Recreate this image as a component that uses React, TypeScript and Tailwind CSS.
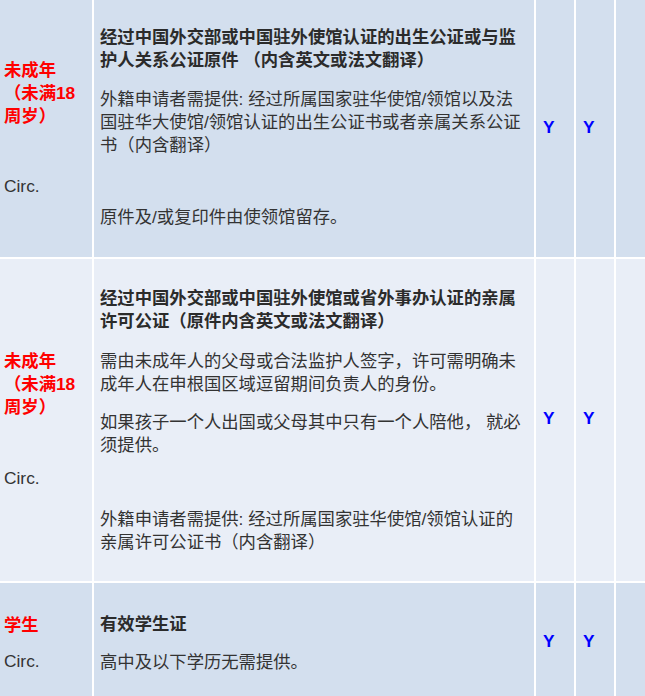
import React from "react";

const font = { fontFamily: '"Liberation Sans", "Noto Sans CJK SC", sans-serif' };

function Who({ label, lines, gap }: { label?: string; lines: string[]; gap: string }) {
  return (
    <div className="flex flex-col justify-center pl-[4px]">
      <div className="font-bold text-[#ff0000] whitespace-nowrap">
        {lines.map((l, i) => (
          <div key={i}>{l}</div>
        ))}
      </div>
      <div className={`${gap} text-[#333]`}>{label ?? "Circ."}</div>
    </div>
  );
}

function Yes() {
  return (
    <div className="flex items-center pl-[7px] pb-[3px] font-bold text-[#0000ff]">Y</div>
  );
}

export default function App() {
  return (
    <div
      className="w-[645px] h-[696px] overflow-hidden bg-white text-[17.33px] leading-[23px] text-[#333]"
      style={font}
    >
      <div className="grid grid-cols-[92px_440px_38px_38px_1fr] grid-rows-[257px_322px_120px] gap-[2px] bg-white">
        {/* 第一行 */}
        <div className="bg-[#d3dfee] flex">
          <Who lines={["未成年", "（未满18", "周岁）"]} gap="mt-[47px]" />
        </div>
        <div className="bg-[#d3dfee] flex flex-col justify-center px-[6px] pb-[3px]">
          <p className="font-bold text-[#2b2b2b]">
            经过中国外交部或中国驻外使馆认证的出生公证或与监护人关系公证原件 （内含英文或法文翻译）
          </p>
          <p className="mt-[16px]">
            外籍申请者需提供: 经过所属国家驻华使馆/领馆以及法国驻华大使馆/领馆认证的出生公证书或者亲属关系公证书（内含翻译）
          </p>
          <p className="mt-[49px]">原件及/或复印件由使领馆留存。</p>
        </div>
        <div className="bg-[#d3dfee] flex">
          <Yes />
        </div>
        <div className="bg-[#d3dfee] flex">
          <Yes />
        </div>
        <div className="bg-[#d3dfee]" />

        {/* 第二行 */}
        <div className="bg-[#e9eef7] flex">
          <Who lines={["未成年", "（未满18", "周岁）"]} gap="mt-[48px]" />
        </div>
        <div className="bg-[#e9eef7] flex flex-col justify-center px-[6px]">
          <p className="font-bold text-[#2b2b2b]">
            经过中国外交部或中国驻外使馆或省外事办认证的亲属许可公证（原件内含英文或法文翻译）
          </p>
          <p className="mt-[17px]">
            需由未成年人的父母或合法监护人签字，许可需明确未成年人在申根国区域逗留期间负责人的身份。
          </p>
          <p className="mt-[15px]">如果孩子一个人出国或父母其中只有一个人陪他， 就必须提供。</p>
          <p className="mt-[51px]">
            外籍申请者需提供: 经过所属国家驻华使馆/领馆认证的亲属许可公证书（内含翻译）
          </p>
        </div>
        <div className="bg-[#e9eef7] flex">
          <Yes />
        </div>
        <div className="bg-[#e9eef7] flex">
          <Yes />
        </div>
        <div className="bg-[#e9eef7]" />

        {/* 第三行 */}
        <div className="bg-[#d3dfee] flex">
          <Who lines={["学生"]} gap="mt-[13px]" />
        </div>
        <div className="bg-[#d3dfee] flex flex-col justify-center px-[6px]">
          <p className="font-bold text-[#2b2b2b]">有效学生证</p>
          <p className="mt-[15px]">高中及以下学历无需提供。</p>
        </div>
        <div className="bg-[#d3dfee] flex">
          <Yes />
        </div>
        <div className="bg-[#d3dfee] flex">
          <Yes />
        </div>
        <div className="bg-[#d3dfee]" />
      </div>
    </div>
  );
}
